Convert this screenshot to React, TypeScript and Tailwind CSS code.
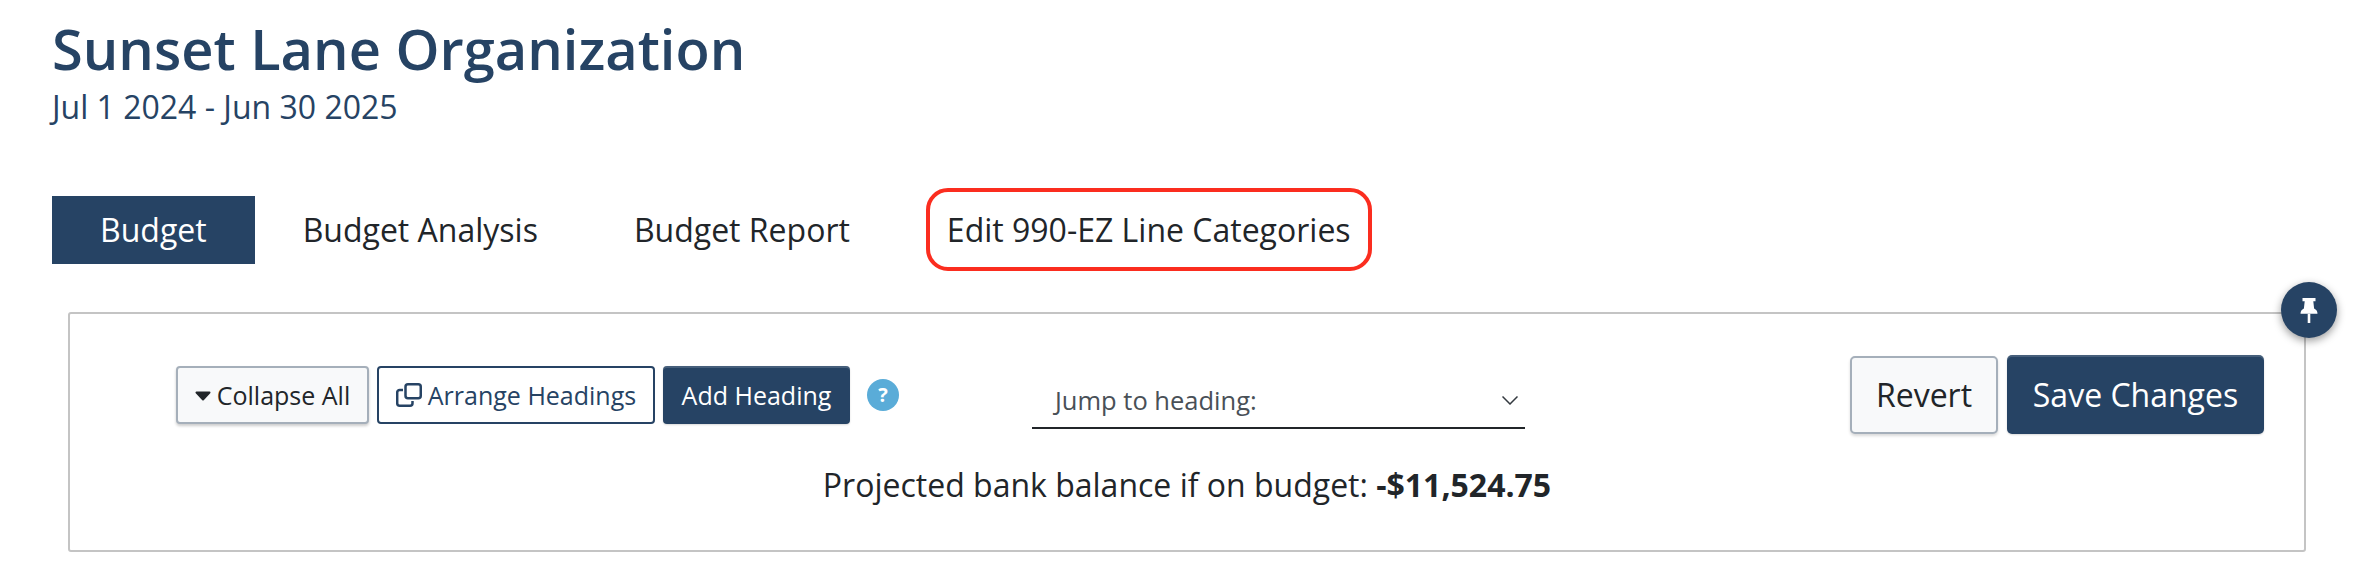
const FONT = "font-['Open_Sans','Noto_Sans',sans-serif]";

const CopyIcon = () => (
  <svg width="26" height="24" viewBox="0 0 26 24" fill="none" stroke="#264364" strokeWidth="2.5" className="mr-[6px]">
    <rect x="9.5" y="1.25" width="15.25" height="14" rx="2.5" />
    <path d="M7 7H3.7a2.5 2.5 0 0 0-2.5 2.5v10.75a2.5 2.5 0 0 0 2.5 2.5h10.3a2.5 2.5 0 0 0 2.5-2.5V18" />
  </svg>
);

const PinIcon = () => (
  <svg width="18" height="25" viewBox="0 0 18 25" fill="white">
    <path d="M2.5 0h13v3.2h-2.2l.8 7.3c2.2 1 3.4 2.9 3.4 5.3H.5c0-2.4 1.2-4.3 3.4-5.3l.8-7.3H2.500z" />
    <rect x="7.7" y="15.800" width="2.6" height="9.200" />
  </svg>
);

const Caret = () => (
  <svg width="16" height="10" viewBox="0 0 16 10" fill="#212529" stroke="#212529" strokeWidth="2" strokeLinejoin="round" className="mr-[6px] mt-[2px]">
    <path d="M1.500 1.500h13L8 8.500z" />
  </svg>
);

const Chevron = () => (
  <svg width="16" height="9" viewBox="0 0 16 9" fill="none" stroke="#343a40" strokeWidth="1.5">
    <path d="M.5.5 8 8l7.500-7.500" />
  </svg>
);

const App = () => {
  return (
    <div className={`${FONT} w-[2374px] h-[584px] bg-white overflow-hidden pl-[52px] pt-[12px]`}>
      <h1 className="text-[56px] leading-[73px] font-semibold text-[#264364]">Sunset Lane Organization</h1>
      <p className="text-[32px] leading-[44px] text-[#264364]">Jul 1 2024 - Jun 30 2025</p>

      <nav className="flex items-center mt-[59px] text-[32px] leading-[40px] text-[#212529]">
        <a className="bg-[#264364] text-white px-[48px] h-[68px] flex items-center">Budget</a>
        <a className="px-[48px] h-[68px] flex items-center">Budget Analysis</a>
        <a className="px-[48px] h-[68px] flex items-center">Budget Report</a>
        <a className="ml-[28px] px-[17px] h-[83px] flex items-center border-4 border-[#fb2d1f] rounded-[22px]">
          Edit 990-EZ Line Categories
        </a>
      </nav>

      <section className="relative w-[2238px] h-[240px] ml-[16px] mt-[41px] border-2 border-[#c4c4c4] rounded-[3px]">
        <button className="absolute -top-[32px] -right-[33px] w-[56px] h-[56px] rounded-full bg-[#264364] flex items-center justify-center shadow-[0_3px_8px_rgba(0,0,0,0.4)]">
          <PinIcon />
        </button>

        <div className="flex items-center pl-[106px] pr-[40px] pt-[41px]">
          <div className="flex items-center text-[25px] leading-[32px]">
            <button className="h-[58px] w-[193px] flex items-center justify-center bg-[#f8f9fa] text-[#212529] border-2 border-[#a5afba] rounded-[4px] shadow-[0_2px_3px_rgba(0,0,0,0.2)]">
              <Caret />
              Collapse All
            </button>
            <button className="h-[58px] w-[278px] ml-[8px] flex items-center justify-center bg-white text-[#264364] border-2 border-[#264364] rounded-[4px]">
              <CopyIcon />
              Arrange Headings
            </button>
            <button className="h-[58px] w-[187px] ml-[8px] flex items-center justify-center bg-[#264364] text-white rounded-[4px] shadow-[inset_0_2px_0_rgba(255,255,255,0.15),0_1px_2px_rgba(0,0,0,0.15)]">
              Add Heading
            </button>
            <span className="ml-[17px] w-[32px] h-[32px] rounded-full bg-[#5aacd8] text-white text-[20px] font-bold flex items-center justify-center">
              ?
            </span>
          </div>

          <div className="ml-[133px] w-[493px] h-[44px] mt-[24px] pb-[11px] flex items-center justify-between pl-[23px] pr-[7px] border-b-2 border-[#212529] text-[25.5px] text-[#495057]">
            Jump to heading:
            <Chevron />
          </div>

          <div className="ml-auto flex items-center gap-[9px] text-[32px] leading-[42px]">
            <button className="h-[78px] w-[148px] bg-[#f8f9fa] text-[#212529] border-2 border-[#a5afba] rounded-[5px] shadow-[0_2px_3px_rgba(0,0,0,0.15)]">
              Revert
            </button>
            <button className="h-[79px] w-[257px] bg-[#264364] text-white rounded-[5px] shadow-[inset_0_2px_0_rgba(255,255,255,0.15),0_1px_2px_rgba(0,0,0,0.15)]">
              Save Changes
            </button>
          </div>
        </div>

        <p className="text-center text-[32px] leading-[40px] text-[#212529] mt-[31px]">
          Projected bank balance if on budget: <b className="font-bold">-$11,524.75</b>
        </p>
      </section>
    </div>
  );
};

export default App;
